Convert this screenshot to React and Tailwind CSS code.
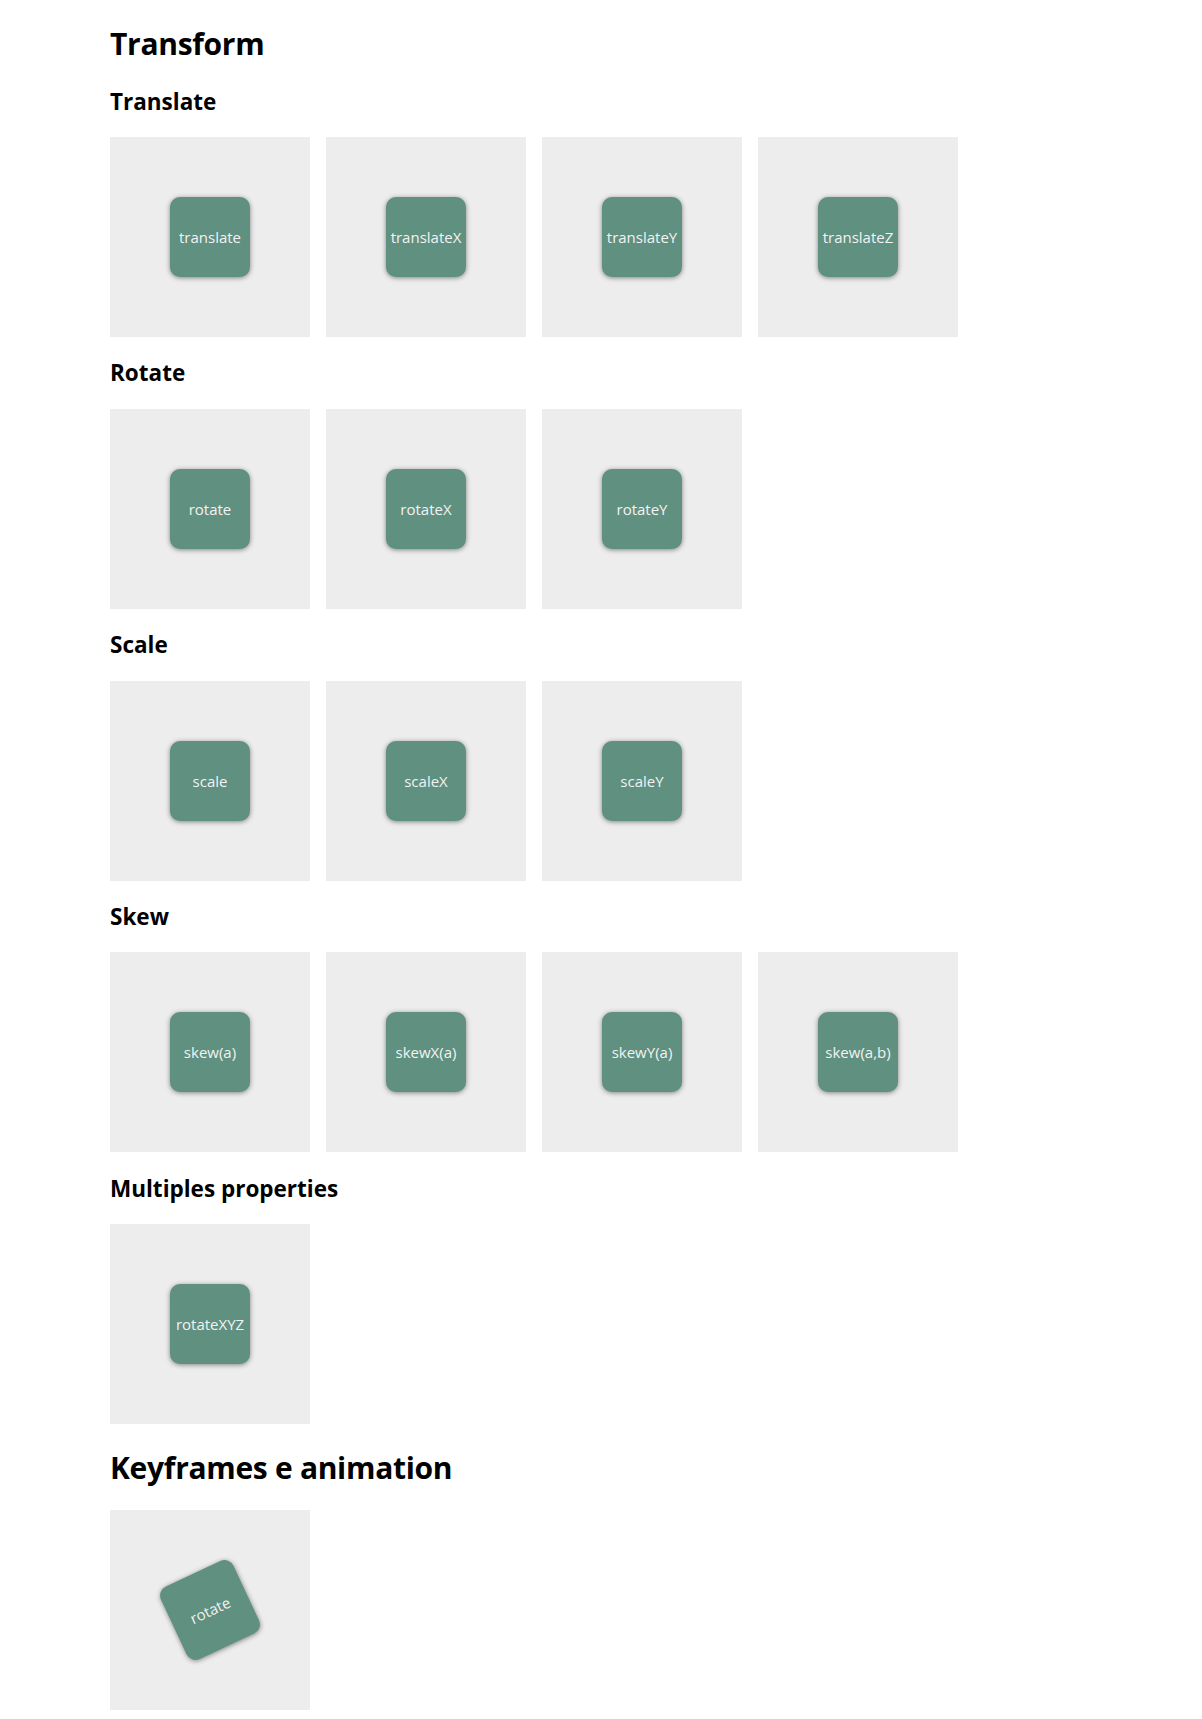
import React from "react";

const green = "w-20 h-20 rounded-[10px] bg-[#5f9080] shadow-[0_1px_5px_rgba(0,0,0,0.45)] flex items-center justify-center text-[#f3f3f3] text-[15px] leading-5";

function Card({ label, rotated }) {
  return (
    <div className="w-[200px] h-[200px] bg-[#ededed] flex items-center justify-center">
      <div className={rotated ? green + " rotate-[-25deg]" : green}>{label}</div>
    </div>
  );
}

function Section({ title, items }) {
  return (
    <section>
      <h2 className="text-[22.5px] pt-[1.2px] leading-[30.72px] font-bold my-[19.92px] text-black">{title}</h2>
      <div className="flex gap-4">
        {items.map((it) => (
          <Card key={it} label={it} />
        ))}
      </div>
    </section>
  );
}

export default function App() {
  return (
    <div
      className="bg-white min-h-[1719px] px-[110px] pt-[21.44px] pb-2 text-black"
      style={{ fontFamily: '"Open Sans", "Noto Sans", sans-serif' }}
    >
      <h1 className="text-[30px] tracking-[-0.3px] pt-[2.5px] leading-[40.06px] font-bold mb-[21.44px]">Transform</h1>
      <Section title="Translate" items={["translate", "translateX", "translateY", "translateZ"]} />
      <Section title="Rotate" items={["rotate", "rotateX", "rotateY"]} />
      <Section title="Scale" items={["scale", "scaleX", "scaleY"]} />
      <Section title="Skew" items={["skew(a)", "skewX(a)", "skewY(a)", "skew(a,b)"]} />
      <Section title="Multiples properties" items={["rotateXYZ"]} />
      <h1 className="text-[30px] tracking-[-0.3px] pt-[2.5px] leading-[40.06px] font-bold mt-[21.44px] mb-[21.44px]">Keyframes e animation</h1>
      <div className="flex">
        <Card label="rotate" rotated />
      </div>
    </div>
  );
}
